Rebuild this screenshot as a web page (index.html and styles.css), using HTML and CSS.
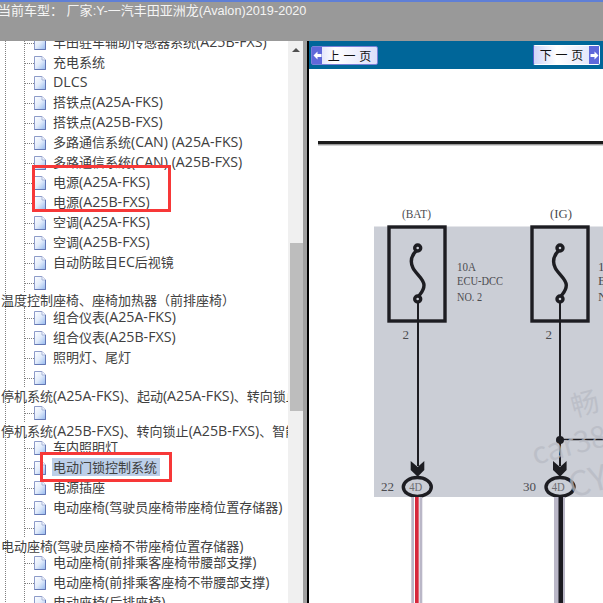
FILE: index.html
```html
<!DOCTYPE html>
<html>
<head>
  <title>当前车型</title>
  <link rel="stylesheet" href="styles.css">
</head>
<body>
  <svg class="defs" width="0" height="0">
    <defs>
      <linearGradient id="doc-fill" x1="0" y1="0" x2="1" y2="1">
        <stop offset="0" stop-color="#ffffff"/>
        <stop offset="0.5" stop-color="#e2ecfb"/>
        <stop offset="1" stop-color="#94b8ee"/>
      </linearGradient>
      <symbol id="doc" viewBox="0 0 12 14">
        <path d="M0.5 0.5H8L11.5 4V13.5H0.5Z" fill="url(#doc-fill)" stroke="#8d9bc9"/>
        <path d="M8 0.5V4H11.5" fill="#f4f8fe" stroke="#a9b5d8"/>
        <path d="M11.5 4V13.5H0.5" fill="none" stroke="#6478b4"/>
      </symbol>
    </defs>
  </svg>

  <div class="topbar">
    <div class="topbar-title">当前车型： 厂家<span class="en">:Y-</span>一汽丰田亚洲龙<span class="en">(Avalon)2019-2020</span></div>
  </div>

  <div class="main">
    <div class="tree-pane">
      <div class="tree">
        <div class="branch">
          <div class="leaf"><i class="dash"></i><svg class="doc-icon"><use href="#doc"/></svg><span class="label">丰田驻车辅助传感器系统<span class="en">(A25B-FXS)</span></span></div>
          <div class="leaf"><i class="dash"></i><svg class="doc-icon"><use href="#doc"/></svg><span class="label">充电系统</span></div>
          <div class="leaf"><i class="dash"></i><svg class="doc-icon"><use href="#doc"/></svg><span class="label"><span class="en">DLCS</span></span></div>
          <div class="leaf"><i class="dash"></i><svg class="doc-icon"><use href="#doc"/></svg><span class="label">搭铁点<span class="en">(A25A-FKS)</span></span></div>
          <div class="leaf"><i class="dash"></i><svg class="doc-icon"><use href="#doc"/></svg><span class="label">搭铁点<span class="en">(A25B-FXS)</span></span></div>
          <div class="leaf"><i class="dash"></i><svg class="doc-icon"><use href="#doc"/></svg><span class="label">多路通信系统<span class="en">(CAN) (A25A-FKS)</span></span></div>
          <div class="leaf"><i class="dash"></i><svg class="doc-icon"><use href="#doc"/></svg><span class="label">多路通信系统<span class="en">(CAN) (A25B-FXS)</span></span></div>
          <div class="leaf"><i class="dash"></i><svg class="doc-icon"><use href="#doc"/></svg><span class="label">电源<span class="en">(A25A-FKS)</span></span></div>
          <div class="leaf"><i class="dash"></i><svg class="doc-icon"><use href="#doc"/></svg><span class="label">电源<span class="en">(A25B-FXS)</span></span></div>
          <div class="leaf"><i class="dash"></i><svg class="doc-icon"><use href="#doc"/></svg><span class="label">空调<span class="en">(A25A-FKS)</span></span></div>
          <div class="leaf"><i class="dash"></i><svg class="doc-icon"><use href="#doc"/></svg><span class="label">空调<span class="en">(A25B-FXS)</span></span></div>
          <div class="leaf"><i class="dash"></i><svg class="doc-icon"><use href="#doc"/></svg><span class="label">自动防眩目<span class="en">EC</span>后视镜</span></div>
          <div class="leaf"><i class="dash"></i><svg class="doc-icon"><use href="#doc"/></svg></div>
        </div>
        <div class="group">温度控制座椅、座椅加热器（前排座椅）</div>
        <div class="branch">
          <div class="leaf"><i class="dash"></i><svg class="doc-icon"><use href="#doc"/></svg><span class="label">组合仪表<span class="en">(A25A-FKS)</span></span></div>
          <div class="leaf"><i class="dash"></i><svg class="doc-icon"><use href="#doc"/></svg><span class="label">组合仪表<span class="en">(A25B-FXS)</span></span></div>
          <div class="leaf"><i class="dash"></i><svg class="doc-icon"><use href="#doc"/></svg><span class="label">照明灯、尾灯</span></div>
          <div class="leaf"><i class="dash"></i><svg class="doc-icon"><use href="#doc"/></svg></div>
        </div>
        <div class="group">停机系统<span class="en">(A25A-FKS)</span>、起动<span class="en">(A25A-FKS)</span>、转向锁止<span class="en">(A25A-FKS)</span></div>
        <div class="branch">
          <div class="leaf"><i class="dash"></i><svg class="doc-icon"><use href="#doc"/></svg></div>
        </div>
        <div class="group">停机系统<span class="en">(A25B-FXS)</span>、转向锁止<span class="en">(A25B-FXS)</span>、智能进入</div>
        <div class="branch">
          <div class="leaf"><i class="dash"></i><svg class="doc-icon"><use href="#doc"/></svg><span class="label">车内照明灯</span></div>
          <div class="leaf"><i class="dash"></i><svg class="doc-icon"><use href="#doc"/></svg><span class="label selected">电动门锁控制系统</span></div>
          <div class="leaf"><i class="dash"></i><svg class="doc-icon"><use href="#doc"/></svg><span class="label">电源插座</span></div>
          <div class="leaf"><i class="dash"></i><svg class="doc-icon"><use href="#doc"/></svg><span class="label">电动座椅<span class="en">(</span>驾驶员座椅带座椅位置存储器<span class="en">)</span></span></div>
          <div class="leaf"><i class="dash"></i><svg class="doc-icon"><use href="#doc"/></svg></div>
        </div>
        <div class="group">电动座椅<span class="en">(</span>驾驶员座椅不带座椅位置存储器<span class="en">)</span></div>
        <div class="branch">
          <div class="leaf"><i class="dash"></i><svg class="doc-icon"><use href="#doc"/></svg><span class="label">电动座椅<span class="en">(</span>前排乘客座椅带腰部支撑<span class="en">)</span></span></div>
          <div class="leaf"><i class="dash"></i><svg class="doc-icon"><use href="#doc"/></svg><span class="label">电动座椅<span class="en">(</span>前排乘客座椅不带腰部支撑<span class="en">)</span></span></div>
          <div class="leaf"><i class="dash"></i><svg class="doc-icon"><use href="#doc"/></svg><span class="label">电动座椅<span class="en">(</span>后排座椅<span class="en">)</span></span></div>
        </div>
      </div>
      <div class="callout callout-power"></div>
      <div class="callout callout-lock"></div>
    </div>

    <div class="scrollbar">
      <div class="scroll-arrow"></div>
      <div class="scroll-thumb"></div>
    </div>

    <div class="splitter"></div>

    <div class="viewer">
      <div class="pager">
        <div class="page-btn page-prev">
          <span class="page-arrow">
            <svg width="9" height="9" viewBox="0 0 9 9"><path d="M0.5 4.5L4.5 0.5V3H8.5V6H4.5V8.5Z" fill="#fff"/></svg>
          </span>
          <span class="page-text">上 一 页</span>
        </div>
        <div class="page-btn page-next">
          <span class="page-text">下 一 页</span>
          <span class="page-arrow">
            <svg width="9" height="9" viewBox="0 0 9 9"><path d="M8.5 4.5L4.5 0.5V3H0.5V6H4.5V8.5Z" fill="#fff"/></svg>
          </span>
        </div>
      </div>

      <svg class="diagram" width="294" height="534" viewBox="309 69 294 534">
        <rect x="318" y="141" width="285" height="3.5" fill="#1c1c1c"/>
        <rect x="318" y="144.5" width="285" height="1" fill="#a8a8a8"/>

        <rect x="374" y="226.5" width="229" height="270.5" fill="#cbced6"/>

        <g class="ink">
          <rect x="389" y="227" width="56" height="94"/>
          <rect x="532" y="227" width="56" height="94"/>
          <circle cx="417.7" cy="248" r="3"/>
          <circle cx="417.7" cy="299" r="3"/>
          <circle cx="560" cy="248" r="3"/>
          <circle cx="560" cy="299" r="3"/>
          <path d="M416.5 250.5C411 256 410 262 413 268C416 274 424 279 424 285C424 291 420 294 418.5 296.5"/>
          <path d="M558.8 250.5C553.3 256 552.3 262 555.3 268C558.3 274 566.3 279 566.3 285C566.3 291 562.3 294 560.8 296.5"/>
          <ellipse cx="417.3" cy="487" rx="14" ry="9.5"/>
          <ellipse cx="560" cy="487" rx="14" ry="9.5"/>
        </g>

        <g class="wire">
          <path d="M418 302V466"/>
          <path d="M560 302V466"/>
          <path d="M560 439.5H603" stroke-width="1.5"/>
        </g>
        <circle cx="560" cy="440" r="4" fill="#1d1d22"/>
        <path d="M410.7 461L417.7 467L424.3 461V470L417.7 476.7L410.7 470Z" fill="#1d1d22"/>
        <path d="M553 461L560 467L566.6 461V470L560 476.7L553 470Z" fill="#1d1d22"/>

        <g class="mark">
          <text x="402" y="218" textLength="29" lengthAdjust="spacingAndGlyphs">(BAT)</text>
          <text x="550" y="218" textLength="22" lengthAdjust="spacingAndGlyphs">(IG)</text>
          <text x="457" y="271" textLength="19" lengthAdjust="spacingAndGlyphs">10A</text>
          <text x="457" y="285" textLength="46" lengthAdjust="spacingAndGlyphs">ECU-DCC</text>
          <text x="457" y="301" textLength="25" lengthAdjust="spacingAndGlyphs">NO. 2</text>
          <text x="598" y="271">10A</text>
          <text x="598" y="285">ECU</text>
          <text x="598" y="301">NO</text>
          <text x="402.5" y="339">2</text>
          <text x="545.5" y="339">2</text>
          <text x="381" y="491" textLength="13" lengthAdjust="spacingAndGlyphs">22</text>
          <text x="523" y="491" textLength="13" lengthAdjust="spacingAndGlyphs">30</text>
          <text x="409.3" y="491" textLength="13" lengthAdjust="spacingAndGlyphs" class="pin">4D</text>
          <text x="551.7" y="491" textLength="13" lengthAdjust="spacingAndGlyphs" class="pin">4D</text>
        </g>

        <g class="watermark">
          <text x="574" y="417" font-size="28" transform="rotate(-15 574 417)">畅</text>
          <text x="535" y="465" font-size="30" transform="rotate(-15 535 465)">car38</text>
          <text x="572" y="498" font-size="34" transform="rotate(-15 572 498)">CY1</text>
        </g>

        <rect x="411.3" y="497" width="11" height="106" fill="#bab7c7"/>
        <rect x="414" y="497" width="5.5" height="106" fill="#fff"/>
        <rect x="415" y="497" width="3.7" height="106" fill="#d6283c"/>
        <rect x="554" y="497" width="11" height="106" fill="#bab7c7"/>
        <rect x="558.5" y="497" width="4.5" height="106" fill="#1b1a20"/>
      </svg>
    </div>
  </div>
</body>
</html>
```

FILE: styles.css
```css
html, body {
  margin: 0;
  height: 100%;
  overflow: hidden;
}

body {
  display: flex;
  flex-direction: column;
  height: 603px;
  background-color: #ffffff;
  font-family: "Open Sans", "Noto Sans CJK SC", sans-serif;
  text-spacing-trim: space-all;
}

.defs {
  position: absolute;
}

.topbar {
  flex: 0 0 39px;
  background-color: #999999;
  border-top: 2px solid #5f7fd6;
  overflow: hidden;
}

.topbar-title {
  margin-left: -2px;
  font-family: "Liberation Sans", "Noto Sans CJK SC", sans-serif;
  font-size: 13px;
  line-height: 17px;
  color: #f4f4f4;
  white-space: nowrap;
}

.topbar-title .en {
  font-size: 12.7px;
}

.main {
  display: flex;
  flex: 1;
  min-height: 0;
}

/* Tree */
.tree-pane {
  position: relative;
  flex: 0 0 288px;
  overflow: hidden;
}

.tree {
  margin-top: -9px;
  margin-left: 5px;
  border-left: 1px dotted #808080;
  font-size: 13px;
  color: #404040;
}

.en {
  font-size: 14.2px;
}

.branch {
  margin-left: 18px;
  border-left: 1px dotted #808080;
}

.leaf {
  display: flex;
  align-items: center;
  height: 20px;
  white-space: nowrap;
}

.dash {
  flex: 0 0 9px;
  margin-top: 2px;
  border-top: 1px dotted #808080;
}

.doc-icon {
  flex: 0 0 12px;
  width: 12px;
  height: 14px;
  margin-top: 2px;
}

.label {
  margin-left: 6px;
  padding: 0 3px 0 1px;
  line-height: 18px;
}

.selected {
  background-color: #bccfe9;
}

.group {
  height: 15px;
  margin-left: -6px;
  padding-left: 1px;
  line-height: 17px;
  white-space: nowrap;
}

.callout {
  position: absolute;
  border: 3px solid #f73838;
  box-sizing: border-box;
}

.callout-power {
  left: 32px;
  top: 124px;
  width: 139px;
  height: 47px;
}

.callout-lock {
  left: 40px;
  top: 411px;
  width: 132px;
  height: 30px;
}

/* Scrollbar */
.scrollbar {
  flex: 0 0 15px;
  background-color: #f0f0f0;
}

.scroll-arrow {
  width: 0;
  height: 0;
  margin: 7px 0 0 4px;
  border-left: 4px solid transparent;
  border-right: 4px solid transparent;
  border-bottom: 4px solid #505050;
}

.scroll-thumb {
  height: 168px;
  margin: 191px 0 0 2px;
  background-color: #bdbdbd;
}

.splitter {
  flex: 0 0 4px;
  background-color: #a0a0a0;
  border-right: 2px solid #000000;
}

/* Viewer */
.viewer {
  flex: 1;
  min-width: 0;
}

.pager {
  display: flex;
  justify-content: space-between;
  align-items: flex-end;
  height: 28px;
  box-sizing: border-box;
  padding: 0 3px 4px 2px;
  background-color: #006699;
}

.page-btn {
  display: flex;
  align-items: center;
  box-sizing: border-box;
  width: 67px;
  height: 19px;
  border: 1px solid #7a80d8;
  border-radius: 2px;
  background: linear-gradient(90deg, #d0d4f8, #ffffff 35%, #dcdffa);
}

.page-next {
  height: 20px;
  border-color: #ffffff;
  border-left-color: #5a60d0;
}

.page-arrow {
  display: flex;
  align-items: center;
  justify-content: center;
  width: 10px;
  align-self: stretch;
  background-color: #5f68da;
}

.page-text {
  flex: 1;
  font-family: "Noto Sans CJK SC", sans-serif;
  font-size: 12px;
  line-height: 16px;
  word-spacing: 1px;
  text-align: center;
  white-space: nowrap;
  color: #111111;
}

.diagram {
  display: block;
}

.ink {
  fill: none;
  stroke: #1d1d22;
  stroke-width: 3.4;
}

.wire {
  fill: none;
  stroke: #1d1d22;
  stroke-width: 2;
}

.mark text {
  font-family: "Liberation Serif", serif;
  font-size: 13px;
  fill: #4c4c50;
}

.mark .pin {
  fill: #6d6d72;
}

.watermark text {
  font-family: "Noto Sans CJK SC", sans-serif;
  fill: #b8bbc4;
  fill-opacity: 0.75;
}
```
